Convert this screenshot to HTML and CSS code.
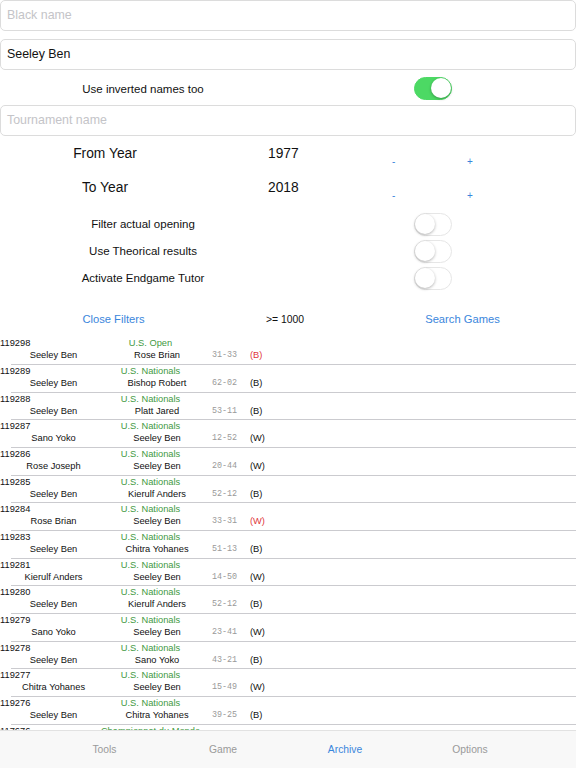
FILE: index.html
```html
<!DOCTYPE html>
<html lang="en">

<head>
    <meta charset="UTF-8">
    <meta name="viewport" content="width=device-width, initial-scale=1.0">
    <title>Archive</title>
    <link rel="stylesheet" href="styles.css">
</head>

<body>
    <div class="screen">
        <!-- filters -->
        <div class="filters">
            <div class="field field-flush"><span class="placeholder">Black name</span></div>
            <div class="field">Seeley Ben</div>
            <div class="switch-row switch-row-inverted">
                <span class="switch-label">Use inverted names too</span>
                <span class="switch on"></span>
            </div>
            <div class="field field-flush"><span class="placeholder">Tournament name</span></div>

            <div class="year-row">
                <span class="year-label">From Year</span>
                <span class="year-value">1977</span>
                <span class="stepper">-</span>
                <span class="stepper">+</span>
            </div>
            <div class="year-row">
                <span class="year-label">To Year</span>
                <span class="year-value">2018</span>
                <span class="stepper">-</span>
                <span class="stepper">+</span>
            </div>

            <div class="switches">
                <div class="switch-row">
                    <span class="switch-label">Filter actual opening</span>
                    <span class="switch"></span>
                </div>
                <div class="switch-row">
                    <span class="switch-label">Use Theorical results</span>
                    <span class="switch"></span>
                </div>
                <div class="switch-row">
                    <span class="switch-label">Activate Endgame Tutor</span>
                    <span class="switch"></span>
                </div>
            </div>

            <div class="filter-bar">
                <span class="link">Close Filters</span>
                <span class="count">&gt;= 1000</span>
                <span class="link">Search Games</span>
            </div>
        </div>

        <!-- games -->
        <div id="game-list" class="game-list"></div>

        <div class="tab-bar">
            <span class="tab">Tools</span>
            <span class="tab">Game</span>
            <span class="tab active">Archive</span>
            <span class="tab">Options</span>
        </div>
    </div>
    <script>
        const games = [
            ['119298', 'U.S. Open', 'Seeley Ben', 'Rose Brian', '31-33', '(B)', true],
            ['119289', 'U.S. Nationals', 'Seeley Ben', 'Bishop Robert', '62-02', '(B)'],
            ['119288', 'U.S. Nationals', 'Seeley Ben', 'Platt Jared', '53-11', '(B)'],
            ['119287', 'U.S. Nationals', 'Sano Yoko', 'Seeley Ben', '12-52', '(W)'],
            ['119286', 'U.S. Nationals', 'Rose Joseph', 'Seeley Ben', '20-44', '(W)'],
            ['119285', 'U.S. Nationals', 'Seeley Ben', 'Kierulf Anders', '52-12', '(B)'],
            ['119284', 'U.S. Nationals', 'Rose Brian', 'Seeley Ben', '33-31', '(W)', true],
            ['119283', 'U.S. Nationals', 'Seeley Ben', 'Chitra Yohanes', '51-13', '(B)'],
            ['119281', 'U.S. Nationals', 'Kierulf Anders', 'Seeley Ben', '14-50', '(W)'],
            ['119280', 'U.S. Nationals', 'Seeley Ben', 'Kierulf Anders', '52-12', '(B)'],
            ['119279', 'U.S. Nationals', 'Sano Yoko', 'Seeley Ben', '23-41', '(W)'],
            ['119278', 'U.S. Nationals', 'Seeley Ben', 'Sano Yoko', '43-21', '(B)'],
            ['119277', 'U.S. Nationals', 'Chitra Yohanes', 'Seeley Ben', '15-49', '(W)'],
            ['119276', 'U.S. Nationals', 'Seeley Ben', 'Chitra Yohanes', '39-25', '(B)'],
            // only the top of this one shows above the tab bar
            ['117676', 'Championnat du Monde']
        ];

        const list = document.getElementById('game-list');

        games.forEach(game => {
            const row = document.createElement('div');
            row.classList.add('game');
            let html =
                '<div class="game-top">' +
                '<span class="game-id">' + game[0] + '</span>' +
                '<span class="game-event">' + game[1] + '</span>' +
                '</div>';
            if (game.length > 2) {
                html +=
                    '<div class="game-bottom">' +
                    '<span class="game-white">' + game[2] + '</span>' +
                    '<span class="game-black">' + game[3] + '</span>' +
                    '<span class="game-score">' + game[4] + '</span>' +
                    '<span class="game-result' + (game[6] ? ' lost' : '') + '">' + game[5] + '</span>' +
                    '</div>';
            }
            row.innerHTML = html;
            list.appendChild(row);
        });
    </script>
</body>

</html>
```

FILE: styles.css
```css
body {
    font-family: "Liberation Sans", Arial, sans-serif;
    margin: 0;
    background-color: #fff;
    color: #111;
}

.screen {
    display: flex;
    flex-direction: column;
    height: 768px;
    overflow: hidden;
}

.filters {
    display: flex;
    flex-direction: column;
}

.field {
    height: 29px;
    line-height: 29px;
    border: 1px solid #dcdcdc;
    border-radius: 5px;
    padding-left: 6px;
    font-size: 12.4px;
    color: #111;
    margin-top: 8px;
}

.field-flush {
    margin-top: 0;
}

.placeholder {
    color: #c4c4c8;
}

.switch-row {
    display: grid;
    grid-template-columns: 286px 128px 38px;
    align-items: center;
    height: 27px;
}

.switch-row-inverted {
    height: 35px;
    padding-top: 2px;
    box-sizing: border-box;
}

.switch-label {
    grid-column: 1;
    text-align: center;
    font-size: 11.5px;
}

.switch {
    grid-column: 3;
    position: relative;
    box-sizing: border-box;
    width: 38px;
    height: 23px;
    border-radius: 12px;
    border: 1.5px solid #e6e6e6;
    background-color: #fff;
}

.switch::after {
    content: '';
    position: absolute;
    top: 0;
    left: 0;
    width: 20px;
    height: 20px;
    border-radius: 50%;
    background-color: #fff;
    box-shadow: 0 1px 3px rgba(0, 0, 0, 0.3);
}

.switch.on {
    border-color: #4cd964;
    background-color: #4cd964;
}

.switch.on::after {
    left: auto;
    right: 0;
}

.year-row {
    display: grid;
    grid-template-columns: 268px 124px 75px 1fr;
    height: 34.6px;
    align-items: center;
}

.year-label {
    padding-right: 58px;
    text-align: center;
    font-size: 13.8px;
}

.year-value {
    font-size: 13.8px;
}

.stepper {
    font-size: 10px;
    color: #3a86dc;
    padding-top: 16px;
}

.switches {
    margin-top: 5.5px;
}

.filter-bar {
    display: grid;
    grid-template-columns: 227px 122px 1fr;
    height: 25px;
    line-height: 25px;
    margin-top: 15px;
    margin-bottom: 5.5px;
    text-align: center;
}

.link {
    font-size: 11.2px;
    color: #3a86dc;
}

.count {
    font-size: 10.4px;
    padding-right: 6px;
}

.game-list {
    flex: 1;
    overflow: hidden;
}

.game {
    height: 27.7px;
    box-sizing: border-box;
    font-size: 9.3px;
    line-height: 12px;
    position: relative;
}

.game::after {
    content: '';
    position: absolute;
    left: 11px;
    right: 0;
    bottom: 0;
    border-bottom: 1px solid #cbcbcf;
}

.game-top {
    display: grid;
    grid-template-columns: 100px 101px;
}

.game-event {
    text-align: center;
    color: #3f9a3f;
    white-space: nowrap;
}

.game-bottom {
    display: grid;
    grid-template-columns: 107px 100px 43px 40px;
}

.game-white,
.game-black {
    text-align: center;
}

.game-score {
    padding-left: 5px;
    font-family: "Liberation Mono", "Courier New", monospace;
    font-size: 8.4px;
    color: #999;
}

.game-result.lost {
    color: #e0353b;
}

.tab-bar {
    display: grid;
    grid-template-columns: 117px 120px 124px 126px;
    padding-left: 46px;
    height: 37px;
    line-height: 37px;
    flex-shrink: 0;
    background-color: #f8f8f8;
    border-top: 1px solid #e2e2e2;
}

.tab {
    text-align: center;
    font-size: 10.3px;
    color: #9a9a9a;
}

.tab.active {
    color: #3a86dc;
}
```
